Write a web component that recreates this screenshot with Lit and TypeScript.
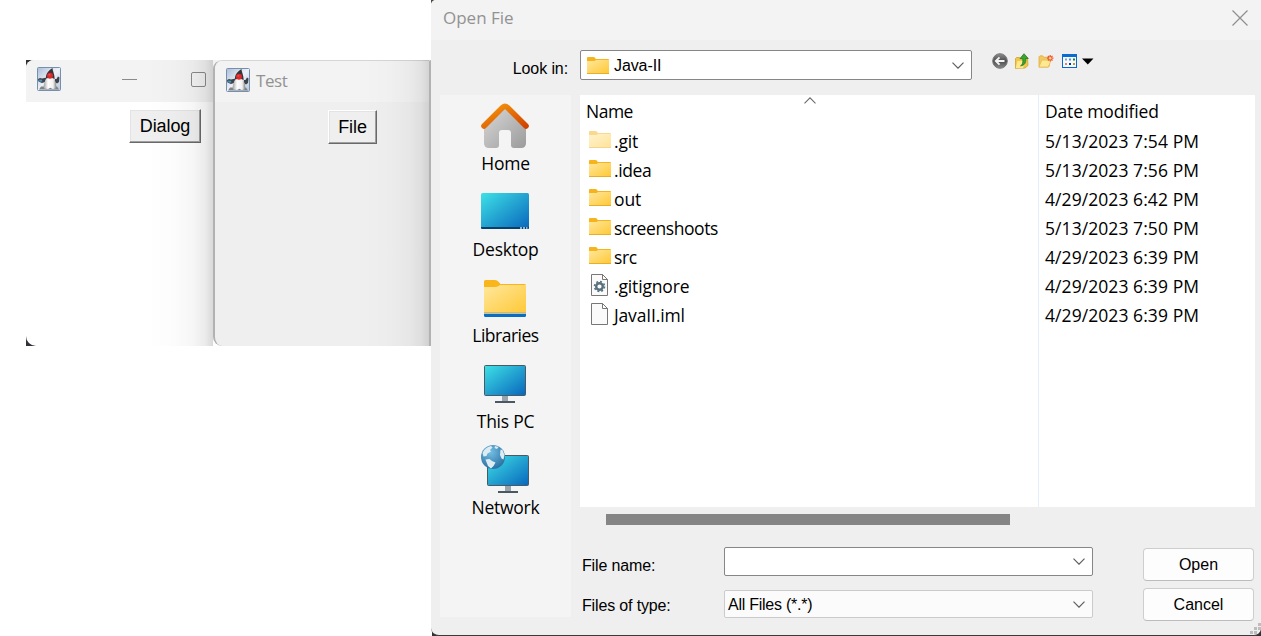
import { LitElement, html, svg, css } from "lit";
import { customElement, property } from "lit/decorators.js";

/* ---------- icons ---------- */

const dukeIcon = html`<svg width="24" height="24" viewBox="0 0 24 24">
  <defs><linearGradient id="dk" x1="0" y1="0" x2="1" y2="1"><stop offset="0" stop-color="#a9bdd8"/><stop offset=".5" stop-color="#eef1f8"/><stop offset="1" stop-color="#b9c6da"/></linearGradient>
  <linearGradient id="db" x1="0" y1="0" x2="1" y2="0"><stop offset="0" stop-color="#a5a5a5"/><stop offset=".35" stop-color="#fff"/><stop offset=".75" stop-color="#f0f0f0"/><stop offset="1" stop-color="#858585"/></linearGradient></defs>
  <rect x=".5" y=".5" width="23" height="23" rx="1" fill="url(#dk)" stroke="#7590ae"/>
  <path d="M4 19.500h16l2 3H2z" fill="#7f8387"/>
  <path d="M1 12l2-1 2 .5L9.500 10.500l-1.500 4.500-3 1L1.500 14.500zM18 12l1.500 0L21 9.500l1.500 1-.5 4.500-2 1.500L17.500 15z" fill="#3c4349"/>
  <path d="M2 12.500l3 .3.500 1.700-3 .2z" fill="#4b94c0"/>
  <path d="M7 21.500C6 17 8 13 10.500 10.500h5.500c2.800 3 3.800 7 3 11l-3.500.500-2-1.200-2.500 1.200z" fill="url(#db)"/>
  <path d="M9 11.500C8.500 7 11.500 3.500 15.500 1c-.2 2.500 2.200 6 2.200 11l-4-1.500z" fill="#34363a"/>
  <circle cx="13" cy="8.700" r="3" fill="#d92a2c"/><circle cx="12.400" cy="7.800" r="1" fill="#f04b46"/>
</svg>`;

const folderShape = svg`<defs><linearGradient id="fo" x1="0" y1="0" x2="1" y2="1"><stop offset="0" stop-color="#ffe79c"/><stop offset="1" stop-color="#ffc937"/></linearGradient></defs>
  <path d="M0 1q0-1 1-1h5.500q.8 0 1.300.6l1 1.400H21q1 0 1 1v6H0z" fill="#f7b31c"/>
  <path d="M0 4h7q.8 0 1.300-.5L9 3h13v13H0z" fill="url(#fo)"/>
  <path d="M0 16.500h22" stroke="#e9ad28"/>`;

const folderIcon = html`<svg width="22" height="17" viewBox="0 0 22 17">${folderShape}</svg>`;

const pageOutline = svg`<path d="M.5.500h11L16.500 5.500v16H.500z" fill="#fafafa" stroke="#777"/><path d="M11.500.500v5h5z" fill="#fff" stroke="#777"/>`;
const fileIcon = html`<svg width="17" height="22" viewBox="0 0 17 22">${pageOutline}</svg>`;
const gearIcon = html`<svg width="17" height="22" viewBox="0 0 17 22">${pageOutline}
  <circle cx="8.500" cy="12.500" r="3.300" fill="none" stroke="#59717f" stroke-width="2.400"/>
  <circle cx="8.500" cy="12.500" r="5" fill="none" stroke="#59717f" stroke-width="1.600" stroke-dasharray="1.960 1.960"/></svg>`;

const chevron = html`<svg width="12" height="7" viewBox="0 0 12 7"><path d="M.5.700L6 6.200 11.500.700" fill="none" stroke="#5e5e5e" stroke-width="1.200"/></svg>`;

const homeIcon = html`<svg width="50" height="46" viewBox="0 0 50 46">
  <defs><linearGradient id="hw" x1="0" y1="0" x2="1" y2="1"><stop offset="0" stop-color="#dadada"/><stop offset="1" stop-color="#9b9b9b"/></linearGradient>
  <linearGradient id="hr" x1="0" y1="0" x2="1" y2="1"><stop offset="0" stop-color="#f8990b"/><stop offset="1" stop-color="#d14302"/></linearGradient></defs>
  <path d="M4 22L25 3l21 19v18q0 5-5 5h-7q-3 0-3-3V30q0-3-3-3h-6q-3 0-3 3v12q0 3-3 3H9q-5 0-5-5z" fill="url(#hw)"/>
  <path d="M4 23L22.500 4.500q2.500-2.200 5 0L46 23" fill="none" stroke="url(#hr)" stroke-width="5.600" stroke-linecap="round"/></svg>`;

const screenGradient = svg`<defs><linearGradient id="sc" x1="0" y1="0" x2="1" y2="1"><stop offset="0" stop-color="#3de2e7"/><stop offset=".45" stop-color="#26a9d3"/><stop offset="1" stop-color="#0866bd"/></linearGradient></defs>`;

const desktopIcon = html`<svg width="48" height="36" viewBox="0 0 48 36">${screenGradient}
  <rect width="48" height="36" rx="1.500" fill="url(#sc)"/><path d="M0 34h48v.5q0 1.500-1.500 1.500h-45Q0 36 0 34.500z" fill="#07416a"/>
  <path d="M39 35h2M42 35h2M45 35h1.500" stroke="#b9dcf0" stroke-width="1.600"/></svg>`;

const librariesIcon = html`<svg width="42" height="37" viewBox="0 0 42 37">
  <defs><linearGradient id="lb" x1="0" y1="0" x2="1" y2="1"><stop offset="0" stop-color="#ffe79c"/><stop offset="1" stop-color="#ffc937"/></linearGradient></defs>
  <path d="M0 1.500Q0 0 1.500 0H11q2 0 3.300 1.500L16.500 4H40.500Q42 4 42 5.500V10H0z" fill="#f9b51c"/>
  <path d="M0 7h11q2 0 3.500-1L16 5h26v28H0z" fill="url(#lb)"/><path d="M0 32.500h42" stroke="#eab43e"/>
  <path d="M0 34h42v1.500q0 1.500-1.500 1.500h-39Q0 37 0 35.500z" fill="#0b6cc4"/><path d="M0 33.500h42" stroke="#9fcbe0"/></svg>`;

const monitorShape = svg`<path d="M18 31h6v5h-6z" fill="#9aa4ad"/><rect x="11" y="36" width="20" height="2" fill="#4b5863"/>
  <rect x=".5" y=".5" width="41" height="30" rx="1" fill="url(#sc)" stroke="#4b5a61"/>`;
const pcIcon = html`<svg width="42" height="38" viewBox="0 0 42 38">${screenGradient}${monitorShape}</svg>`;
const networkIcon = html`<svg width="48" height="48" viewBox="0 0 48 48">${screenGradient}
  <defs><radialGradient id="gl" cx=".4" cy=".3" r=".75"><stop offset="0" stop-color="#75bfe5"/><stop offset="1" stop-color="#256d9f"/></radialGradient></defs>
  <g transform="translate(6 10)">${monitorShape}</g>
  <circle cx="12" cy="12" r="12" fill="url(#gl)"/>
  <path d="M1.500 8C3 4.500 6 2 10 1l1.500 1.500L9 5l1 1.500-3.500 2L5.500 11l-3 .5zM19.500 4.500l2 .5 2 5-1 4.500-2-1-1.500-3.500zM4.500 14.500l4-.5 2.500 2 3.500 1.500-2 3.500-2.500 2.500L7 21zM14 1l3.500 1-1.500 2-2.500-1z" fill="#dcecf2"/></svg>`;

const backIcon = html`<svg width="16" height="16" viewBox="0 0 16 16">
  <defs><linearGradient id="bk" x1="0" y1="0" x2="0" y2="1"><stop offset="0" stop-color="#8e8e8e"/><stop offset=".5" stop-color="#4c4c4c"/><stop offset="1" stop-color="#8b8b8b"/></linearGradient></defs>
  <circle cx="8" cy="8" r="7.300" fill="url(#bk)" stroke="#777"/><path d="M12.500 8H4M7.500 4.300L3.800 8l3.700 3.700" fill="none" stroke="#f4f4f4" stroke-width="1.900"/></svg>`;
const upIcon = html`<svg width="14" height="16" viewBox="0 0 14 16">
  <path d="M.5 5.500l1-1h3l1 1.500h4l3-1 .5 7.500-3 2.500-9.500.5z" fill="#f0c74a" stroke="#cf9f2c" stroke-width=".8"/>
  <path d="M2.500 8h7.500L8 15.200H.700z" fill="#ffe88c"/>
  <path d="M5.500 12.800c2.200-1 2.700-3.500 2.200-7.300H5L9 .700l4.300 4.800h-2.500c.3 4.500-1.300 7-5.300 7.300z" fill="#37a52e" stroke="#1b721d" stroke-width=".7"/></svg>`;
const newFolderIcon = html`<svg width="16" height="14" viewBox="0 0 17 15">
  <path d="M1 3l1-1h3l1 1.500h6V13l-1 1H1z" fill="#f2cb60" stroke="#dca93b" stroke-width=".8"/><path d="M1 14L4 6.500h10L11 14z" fill="#ffe892" stroke="#e5bb52" stroke-width=".8"/>
  <path d="M13 1v7M9.500 4.500h7M10.500 2l5 5M15.500 2l-5 5" stroke="#f0532b" stroke-width="1.300"/><circle cx="13" cy="4.500" r="1.300" fill="#ffd9a0"/></svg>`;
const viewIcon = html`<svg width="15" height="14" viewBox="0 0 15 14">
  <rect x=".5" y=".5" width="14" height="13" fill="#f3faff" stroke="#0f66c4"/><path d="M0 1.500h15" stroke="#0d6ad0" stroke-width="3"/>
  <path d="M3 5.500h2" stroke="#8ba0c8" stroke-width="2"/><path d="M7 5.500h2" stroke="#6685c9" stroke-width="2"/><path d="M11 5.500h2" stroke="#118435" stroke-width="2"/>
  <path d="M3 10h2" stroke="#ef7d57" stroke-width="2"/><path d="M7 10h2" stroke="#142f96" stroke-width="2"/><path d="M11 10h2" stroke="#c9962a" stroke-width="2"/></svg>`;
const dropIcon = html`<svg width="12" height="7" viewBox="0 0 12 7"><path d="M0 .5h11.500L5.800 6.500z" fill="#000"/></svg>`;

/* ---------- data ---------- */

const places = [
  { label: "Home", icon: homeIcon },
  { label: "Desktop", icon: desktopIcon },
  { label: "Libraries", icon: librariesIcon },
  { label: "This PC", icon: pcIcon },
  { label: "Network", icon: networkIcon },
];

const files = [
  { name: ".git", kind: "hidden", date: "5/13/2023 7:54 PM" },
  { name: ".idea", kind: "folder", date: "5/13/2023 7:56 PM" },
  { name: "out", kind: "folder", date: "4/29/2023 6:42 PM" },
  { name: "screenshoots", kind: "folder", date: "5/13/2023 7:50 PM" },
  { name: "src", kind: "folder", date: "4/29/2023 6:39 PM" },
  { name: ".gitignore", kind: "gear", date: "4/29/2023 6:39 PM" },
  { name: "JavaII.iml", kind: "file", date: "4/29/2023 6:39 PM" },
];

/* ---------- AWT button ---------- */

@customElement("awt-button")
export class AwtButton extends LitElement {
  @property() label = "";
  static styles = css`
    :host { display: block; }
    .btn { box-sizing: border-box; width: 100%; height: 34px; padding: 0 1px 1px; background: #efefef; border: 1px solid; border-color: #fff #696969 #696969 #fff;
      box-shadow: inset -1px -1px #a0a0a0, inset 1px 1px #e3e3e3; font: 18px/30px "Liberation Sans", Arial, sans-serif; letter-spacing: -.1px; color: #000; text-align: center; display: block; }
  `;
  render() { return html`<button class="btn">${this.label}</button>`; }
}

/* ---------- file dialog ---------- */

@customElement("file-dialog")
export class FileDialog extends LitElement {
  static styles = css`
    :host { display: block; font: 16px/20px "Liberation Sans", Arial, sans-serif; color: #000; }
    svg { display: block; flex: none; }
    .window { box-sizing: border-box; width: 830px; height: 636px; background: #efefef; border-bottom: 1px solid #3b3b3d; border-radius: 5px 0 7px 8px; overflow: hidden; display: flex; flex-direction: column; }
    .title { height: 40px; box-sizing: border-box; background: #f3f3f3; display: flex; justify-content: space-between; padding: 5px 13px 0 12px; font: 17px/26px "Open Sans", sans-serif; color: #929292; }
    .title svg { margin-top: 5px; }
    .look { height: 55px; display: flex; padding-top: 10px; box-sizing: border-box; }
    .look-label { width: 137px; text-align: right; padding-top: 9px; margin-right: 12px; letter-spacing: -.1px; }
    .combo { box-sizing: border-box; display: flex; align-items: center; background: #fff; border: 1px solid #868686; border-radius: 2px; padding: 0 7px 0 6px; height: 30px; }
    .combo .value { flex: 1; }
    .dir { width: 392px; }
    .dir .value { padding: 2px 0 0 5px; letter-spacing: -.1px; }
    .tools { display: flex; align-items: flex-start; margin-left: 20px; padding-top: 3px; }
    .tools svg:nth-child(2) { margin: 0 0 0 7px; }
    .tools svg:nth-child(3) { margin: 1px 0 0 9px; }
    .tools svg:nth-child(4) { margin: 1px 0 0 8px; }
    .tools svg:nth-child(5) { margin: 5px 0 0 5px; }
    .main { flex: 1; display: flex; }
    .places { width: 131px; height: 522px; margin: 0 9px; background: #f4f4f4; padding-top: 4px; box-sizing: border-box; }
    .place { height: 86px; display: flex; flex-direction: column; align-items: center; font: 17.500px/24px "Open Sans", sans-serif; letter-spacing: -.25px; }
    .place .pic { height: 52px; box-sizing: border-box; display: flex; align-items: center; padding-right: 2px; }
    .place:nth-child(1) .pic { padding-top: 2px; }
    .place:nth-child(3) { letter-spacing: -.5px; }
    .place:nth-child(3) .pic { padding-top: 3px; }
    .place:nth-child(4) .pic { padding-top: 1px; }
    .right { flex: 1; }
    .list { width: 675px; height: 412px; background: #fff; display: grid; grid-template-columns: 458px 1fr; font: 17.500px/29px "Open Sans", sans-serif; position: relative; }
    .col { padding: 1px 0 0 6px; }
    .col + .col { border-left: 1px solid #e4effc; }
    .head { height: 30px; line-height: 30px; letter-spacing: -.15px; }
    .names .head { letter-spacing: -.5px; }
    .cell { height: 29px; line-height: 30px; white-space: nowrap; letter-spacing: .07px; }
    .names .cell { display: flex; letter-spacing: -.15px; }
    .names .cell:nth-child(3) { letter-spacing: -.4px; }
    .names .cell:nth-child(5) { letter-spacing: -.42px; }
    .names .cell:nth-child(6) { letter-spacing: -.4px; }
    .ico { width: 27px; height: 24px; padding-top: 2px; display: flex; justify-content: center; align-items: center; margin-right: 1px; box-sizing: border-box; }
    .ico.gear, .ico.file { height: 26px; padding-right: 1px; }
    .hidden svg { opacity: .5; }
    .sort { position: absolute; left: 224px; top: 2px; }
    .scroll { height: 40px; padding: 7px 0 0 26px; box-sizing: border-box; }
    .thumb { width: 404px; height: 11px; background: #858585; }
    .form { display: grid; grid-template-columns: 142px 369px 161px; row-gap: 6px; padding-left: 2px; }
    .form .lbl { padding-top: 9px; letter-spacing: -.15px; }
    .form .combo { padding-left: 3px; padding-right: 7px; height: 29px; }
    .form .type { height: 28px; background: #fbfbfb; border-color: #cbcbcb; margin-top: 3px; }
    .type .value { letter-spacing: -.25px; padding-top: 1px; }
    .act { box-sizing: border-box; width: 111px; height: 33px; margin: 1px 0 0 50px; border: 1px solid #cecece; border-bottom-color: #bcbcbc; border-radius: 4px; background: #fdfdfd; font: 16px/20px "Liberation Sans", Arial, sans-serif; color: #000; padding: 0; }
    .grip { position: absolute; right: 0; bottom: 2px; }
  `;

  private icon(kind: string) {
    return kind === "gear" ? gearIcon : kind === "file" ? fileIcon : folderIcon;
  }

  render() {
    return html`<div class="window">
      <div class="title"><span>Open Fie</span>
        <svg width="16" height="16" viewBox="0 0 16 16"><path d="M.5.500l15 15M15.500.500l-15 15" stroke="#8e8e8e" stroke-width="1.200"/></svg></div>
      <div class="look">
        <div class="look-label">Look in:</div>
        <div class="combo dir">${folderIcon}<span class="value">Java-II</span>${chevron}</div>
        <div class="tools">${backIcon}${upIcon}${newFolderIcon}${viewIcon}${dropIcon}</div>
      </div>
      <div class="main">
        <div class="places">${places.map((p) => html`<div class="place"><div class="pic">${p.icon}</div><span>${p.label}</span></div>`)}</div>
        <div class="right">
          <div class="list">
            <div class="col names"><div class="head">Name</div>
              ${files.map((f) => html`<div class="cell"><span class="ico ${f.kind}">${this.icon(f.kind)}</span><span>${f.name}</span></div>`)}</div>
            <div class="col"><div class="head">Date modified</div>
              ${files.map((f) => html`<div class="cell">${f.date}</div>`)}</div>
            <svg class="sort" width="12" height="7" viewBox="0 0 12 7"><path d="M.5 6.300L6 .8l5.500 5.500" fill="none" stroke="#6a6a6a" stroke-width="1.100"/></svg>
          </div>
          <div class="scroll"><div class="thumb"></div></div>
          <div class="form">
            <div class="lbl">File name:</div><div class="combo"><span class="value"></span>${chevron}</div><button class="act">Open</button>
            <div class="lbl">Files of type:</div><div class="combo type"><span class="value">All Files (*.*)</span>${chevron}</div><button class="act">Cancel</button>
          </div>
        </div>
      </div>
      <svg class="grip" width="12" height="12" viewBox="0 0 12 12"><path d="M9 1h3v3h-3zM5 5h3v3h-3zM9 5h3v3h-3zM1 9h3v3h-3zM5 9h3v3h-3z" fill="#bdbdbd"/></svg>
    </div>`;
  }
}

/* ---------- desktop ---------- */

@customElement("app-root")
export class AppRoot extends LitElement {
  static styles = css`
    :host { display: block; position: relative; width: 1261px; height: 636px; background: #fff; overflow: hidden; }
    svg { display: block; }
    .win { position: absolute; top: 60px; height: 286px; box-sizing: border-box; overflow: hidden; }
    .back { left: 26px; width: 405px; background: linear-gradient(to right, #303236 20px, #d4d4d4 160px); }
    .back .inner { height: 286px; border-radius: 8px 0 0 10px; background: #fff; overflow: hidden; }
    .bar { height: 42px; background: #f3f3f3; box-sizing: border-box; display: flex; }
    .back .bar { padding: 7px 0 0 11px; }
    .min { width: 15px; height: 1px; background: #8b8b8b; margin: 12px 0 0 61px; }
    .max { width: 15px; height: 15px; box-sizing: border-box; border: 1px solid #8a8a8a; border-radius: 2px; margin: 5px 0 0 54px; }
    .dialog-btn { width: 72px; margin: 7px 0 0 103px; }
    .front { left: 213px; width: 218px; border: 2px solid #b2b2b2; border-top: 1px solid #d6d6d6; border-bottom: 0; border-radius: 9px 0 0 9px; background: #efefef; }
    .front .bar { padding: 7px 0 0 11px; height: 41px; font: 17px/26px "Open Sans", sans-serif; letter-spacing: -.4px; color: #929292; gap: 6px; }
    .file-btn { width: 49px; margin: 8px 0 0 113px; }
    .shade { position: absolute; top: 60px; height: 286px; width: 66px; }
    .s1 { left: 147px; background: linear-gradient(to right, rgba(0,0,0,0), rgba(0,0,0,.012) 40%, rgba(0,0,0,.035) 70%, rgba(0,0,0,.08) 88%, rgba(0,0,0,.15)); }
    .s2 { left: 363px; background: linear-gradient(to right, rgba(0,0,0,0), rgba(0,0,0,.012) 40%, rgba(0,0,0,.035) 70%, rgba(0,0,0,.07) 88%, rgba(0,0,0,.13)); }
    .corner { position: absolute; left: 431px; top: 0; width: 12px; height: 12px; background: #4d4c42; }
    .corner.low { top: 624px; left: 432px; background: #303236; }
    .corner.right { top: 624px; left: 1249px; background: #303236; }
    .dialog { position: absolute; left: 431px; top: 0; }
  `;
  render() {
    return html`
      <div class="win back"><div class="inner">
        <div class="bar">${dukeIcon}<span class="min"></span><span class="max"></span></div>
        <awt-button class="dialog-btn" label="Dialog"></awt-button>
      </div></div>
      <div class="shade s1"></div>
      <div class="win front">
        <div class="bar">${dukeIcon}<span>Test</span></div>
        <awt-button class="file-btn" label="File"></awt-button>
      </div>
      <div class="shade s2"></div>
      <div class="corner"></div><div class="corner low"></div><div class="corner right"></div>
      <file-dialog class="dialog"></file-dialog>`;
  }
}
